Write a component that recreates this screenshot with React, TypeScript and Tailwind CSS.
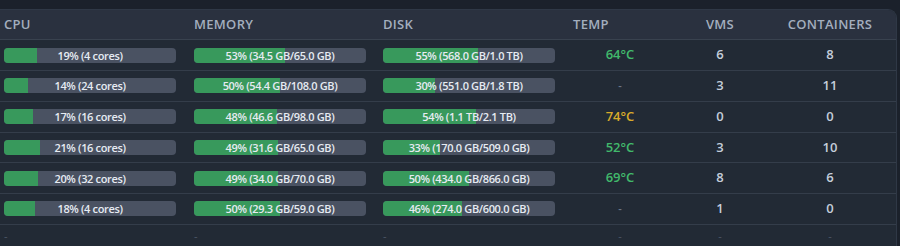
import React from "react";

type Row = {
  cpu: number; cpuText: string;
  mem: number; memText: string;
  disk: number; diskText: string;
  temp: string | null; tempColor?: string;
  vms: string; containers: string;
};

const rows: Row[] = [
  { cpu: 19, cpuText: "19% (4 cores)", mem: 53, memText: "53% (34.5 GB/65.0 GB)", disk: 55, diskText: "55% (568.0 GB/1.0 TB)", temp: "64°C", tempColor: "text-[#41b96b]", vms: "6", containers: "8" },
  { cpu: 14, cpuText: "14% (24 cores)", mem: 50, memText: "50% (54.4 GB/108.0 GB)", disk: 30, diskText: "30% (551.0 GB/1.8 TB)", temp: null, vms: "3", containers: "11" },
  { cpu: 17, cpuText: "17% (16 cores)", mem: 48, memText: "48% (46.6 GB/98.0 GB)", disk: 54, diskText: "54% (1.1 TB/2.1 TB)", temp: "74°C", tempColor: "text-[#d8aa2a]", vms: "0", containers: "0" },
  { cpu: 21, cpuText: "21% (16 cores)", mem: 49, memText: "49% (31.6 GB/65.0 GB)", disk: 33, diskText: "33% (170.0 GB/509.0 GB)", temp: "52°C", tempColor: "text-[#41b96b]", vms: "3", containers: "10" },
  { cpu: 20, cpuText: "20% (32 cores)", mem: 49, memText: "49% (34.0 GB/70.0 GB)", disk: 50, diskText: "50% (434.0 GB/866.0 GB)", temp: "69°C", tempColor: "text-[#41b96b]", vms: "8", containers: "6" },
  { cpu: 18, cpuText: "18% (4 cores)", mem: 50, memText: "50% (29.3 GB/59.0 GB)", disk: 46, diskText: "46% (274.0 GB/600.0 GB)", temp: null, vms: "1", containers: "0" },
];

function Bar({ pct, text }: { pct: number; text: string }) {
  return (
    <div className="relative w-[172px] h-[15px] rounded-[4px] bg-[#4a5262] overflow-hidden">
      <div className="h-full bg-[#38995c]" style={{ width: `${pct}%` }} />
      <div className="absolute inset-0 flex items-center justify-center text-[11px] font-semibold tracking-[-0.35px] text-[#e6ebf2] leading-none whitespace-nowrap">
        {text}
      </div>
    </div>
  );
}

const Dash = () => <span className="text-[#6b7689] text-[11px] leading-[8px] inline-block">-</span>;

export default function App() {
  return (
    <div
      className="w-[900px] h-[246px] overflow-hidden bg-[#1b212b] pt-[9px]"
      style={{ fontFamily: '"Open Sans", "Noto Sans", sans-serif' }}
    >
      <div className="ml-[-10px] w-[907px] h-[240px] bg-[#222a35] border border-b-0 border-[#2f3846] rounded-tr-[9px] overflow-hidden">
        <div className="flex items-center h-[30px] bg-[#2a313f] border-b border-[#39424f] text-[13px] font-semibold text-[#a3aebe] tracking-[0.3px]">
          <div className="w-[203px] pl-[13px]">CPU</div>
          <div className="w-[189px]">MEMORY</div>
          <div className="w-[190px]">DISK</div>
          <div className="w-[94px]">TEMP</div>
          <div className="w-[106px] text-center">VMS</div>
          <div className="w-[114px] text-center">CONTAINERS</div>
        </div>
        {rows.map((r, i) => (
          <div key={i} className={`flex items-center border-b border-[#343d4a] ${i % 2 === 0 ? "h-[31px]" : "h-[30.5px]"}`}>
            <div className="w-[203px] pl-[13px]"><Bar pct={r.cpu} text={r.cpuText} /></div>
            <div className="w-[189px]"><Bar pct={r.mem} text={r.memText} /></div>
            <div className="w-[190px]"><Bar pct={r.disk} text={r.diskText} /></div>
            <div className={`w-[94px] text-center text-[13px] font-semibold ${r.tempColor ?? ""}`}>
              {r.temp ?? <Dash />}
            </div>
            <div className="w-[106px] text-center text-[13px] font-semibold text-[#c5cedb]">{r.vms}</div>
            <div className="w-[114px] text-center text-[13px] font-semibold text-[#c5cedb]">{r.containers}</div>
          </div>
        ))}
        <div className="flex items-center h-[18px] opacity-60">
          <div className="w-[203px] pl-[13px]"><Dash /></div>
          <div className="w-[189px]"><Dash /></div>
          <div className="w-[190px]"><Dash /></div>
          <div className="w-[94px] text-center"><Dash /></div>
          <div className="w-[106px] text-center"><Dash /></div>
          <div className="w-[114px] text-center"><Dash /></div>
        </div>
      </div>
    </div>
  );
}
